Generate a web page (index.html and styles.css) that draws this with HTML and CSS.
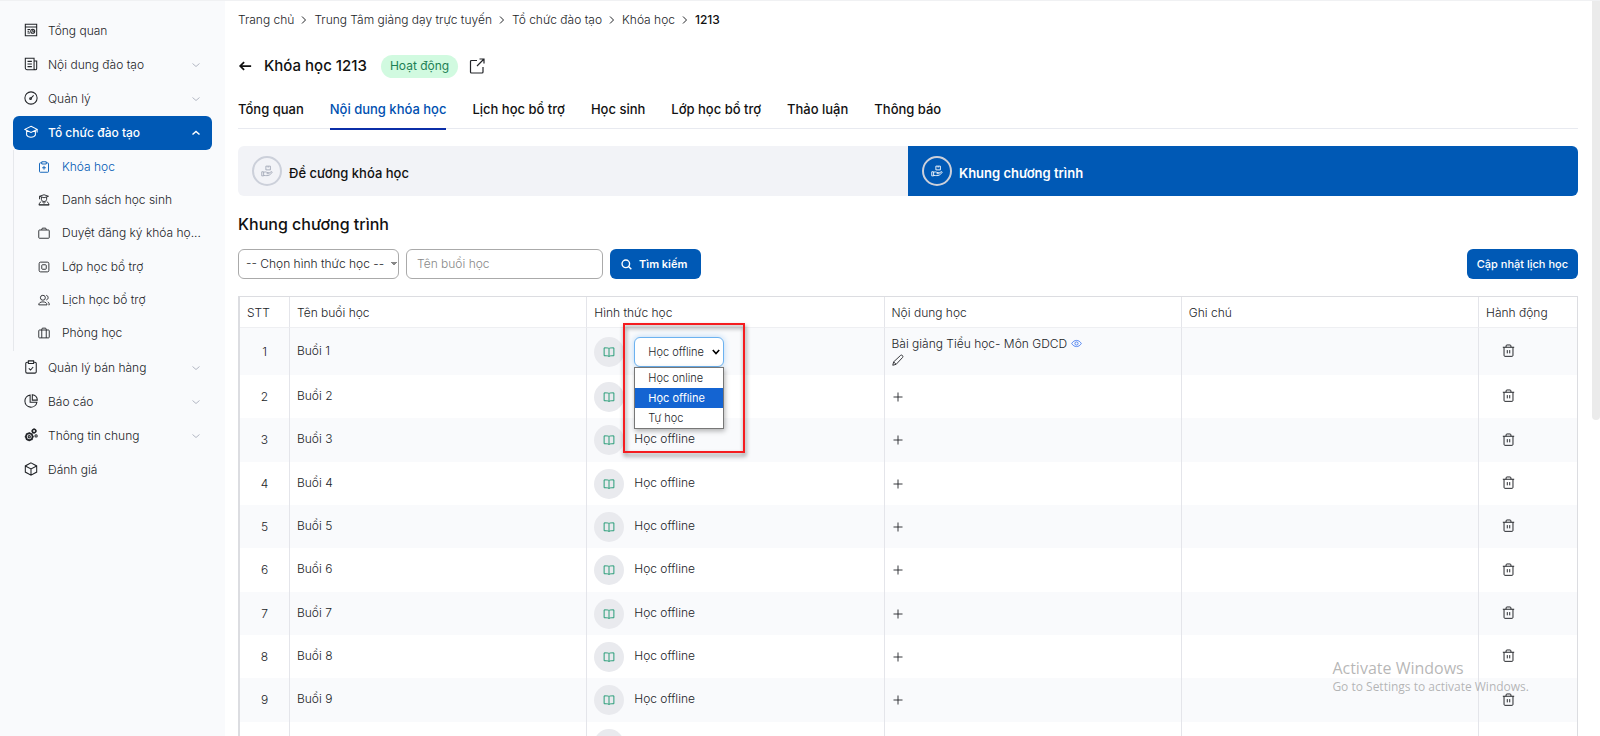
FILE: index.html
```html
<!DOCTYPE html>
<html lang="vi">
<head>
    <meta charset="UTF-8">
    <meta name="viewport" content="width=device-width, initial-scale=1.0">
    <title>Khóa học 1213</title>
    <link rel="stylesheet" href="styles.css">
</head>
<body>
    <!-- icon sprite -->
    <svg class="sprite" aria-hidden="true">
        <symbol id="i-dashboard" viewBox="0 0 16 16"><path d="M1.5 1.5h13v13h-13zM1.5 4.5h13M4 7.5h3M4 9.5h2M4 11.5h3"/><circle cx="10" cy="9.500" r="2.300"/><path d="M10 7.200v2.300h2.300"/></symbol>
        <symbol id="i-news" viewBox="0 0 16 16"><path d="M1.500 1.500h10v13h-8a2 2 0 0 1-2-2zM11.500 4.500h3v8.500a1.500 1.500 0 0 1-3 0M4 5h5M4 8h5M4 11h5"/></symbol>
        <symbol id="i-gauge" viewBox="0 0 16 16"><circle cx="8" cy="8" r="7"/><path d="M7.500 8.800 11 5"/><circle cx="7.500" cy="8.800" r="1"/></symbol>
        <symbol id="i-school" viewBox="0 0 16 16"><path d="M8 1.500 15 5 8 8.500 1 5zM3 6.200v5.300c1.500 3.300 8.500 3.300 10 0V6.200M15 5v3.500"/></symbol>
        <symbol id="i-clip-plus" viewBox="0 0 16 16"><path d="M5 2.500H3a1 1 0 0 0-1 1v10.500a1 1 0 0 0 1 1h10a1 1 0 0 0 1-1V3.500a1 1 0 0 0-1-1h-2M5 1h6v3H5zM8 6.500v5M5.500 9h5"/></symbol>
        <symbol id="i-student" viewBox="0 0 16 16"><path d="M8 1 14 3 8 5 2 3zM4.500 4v3c0 4 7 4 7 0V4M2 3v4M5.500 10 8 12.500 10.500 10M4 10.500c-1.500.5-2.500 2-2.500 4h13c0-2-1-3.500-2.500-4M1 14.500h14"/></symbol>
        <symbol id="i-bag" viewBox="0 0 16 16"><rect x="1" y="4" width="14" height="11" rx="1"/><path d="M5 4V3a1.500 1.500 0 0 1 1.500-1.500h3A1.500 1.500 0 0 1 11 3v1"/></symbol>
        <symbol id="i-square" viewBox="0 0 16 16"><rect x="1.500" y="1.500" width="13" height="13" rx="2"/><rect x="5" y="5" width="6" height="6" rx="1"/></symbol>
        <symbol id="i-users" viewBox="0 0 16 16"><circle cx="6.500" cy="5" r="3.300"/><path d="M1 14.500c0-2.500 2-4 5.500-4s5.500 1.500 5.500 4zM11 1.800c3.300.5 3.300 5.500 0 6.200M13 10.500c1.500.8 2 2 2 4h-1"/></symbol>
        <symbol id="i-case" viewBox="0 0 16 16"><rect x="1" y="4" width="14" height="10.500" rx="1"/><path d="M5 14.500V3a1.500 1.500 0 0 1 1.500-1.500h3A1.500 1.500 0 0 1 11 3v11.500"/></symbol>
        <symbol id="i-clip-check" viewBox="0 0 16 16"><path d="M5 2.500H3.500a1.500 1.500 0 0 0-1.500 1.500v9.500A1.500 1.500 0 0 0 3.500 15h9a1.500 1.500 0 0 0 1.500-1.500V4a1.500 1.500 0 0 0-1.500-1.500H11M5 1h6v3H5zM5.500 9.500 7.500 11.500 10.500 8"/></symbol>
        <symbol id="i-pie" viewBox="0 0 16 16"><path d="M7 1.300a6.900 6.900 0 1 0 7.700 8.200H7zM9.500 .8v6.200h5.700A6.300 6.300 0 0 0 9.500 .8z"/></symbol>
        <symbol id="i-gears" viewBox="0 0 16 16"><circle cx="6" cy="10" r="3.800" stroke-width="2"/><circle cx="6" cy="10" r="1.300"/><path d="M6 4.800v1.400M6 13.800v1.400M.8 10h1.400M9.800 10h1.400M2.300 6.300l1 1M8.700 12.700l1 1M2.300 13.700l1-1M8.700 7.300l1-1"/><circle cx="11.500" cy="3.500" r="2" stroke-width="1.800"/><circle cx="13.800" cy="9" r="1.300"/><path d="M11.500.6v.9M11.500 5.500v.9M8.600 3.500h.9M13.500 3.500h.9"/></symbol>
        <symbol id="i-box" viewBox="0 0 16 16"><path d="M8 1 14.500 4.500v7L8 15 1.500 11.500v-7zM1.500 4.500 8 8l6.500-3.500M8 8v7"/></symbol>
        <symbol id="i-down" viewBox="0 0 16 16"><path d="m1 5 7 6 7-6"/></symbol>
        <symbol id="i-up" viewBox="0 0 16 16"><path d="m1 11 7-6 7 6"/></symbol>
        <symbol id="i-right" viewBox="0 0 16 16"><path d="m4 1 7 7-7 7"/></symbol>
        <symbol id="i-back" viewBox="0 0 16 16"><path d="M15 8H2M7 3.500 2.500 8 7 12.500"/></symbol>
        <symbol id="i-export" viewBox="0 0 16 16"><path d="M8 2.500H2.500a1 1 0 0 0-1 1v10.500a1 1 0 0 0 1 1H13a1 1 0 0 0 1-1V9M10.500 1H15v4.500M15 1 8 8"/></symbol>
        <symbol id="i-hand" viewBox="0 0 16 16"><path d="M6.500 1.500h6v5h-6zM9.500 1.500V3.500M1 9h2.500v5.500H1zM3.500 10c2-1.500 3.500-.5 4.500 0h2c1 0 1 1.600 0 1.600H7.500M10.500 11l3-2c1-.5 2 .5 1 1.500l-3.500 3c-2 1-4 .5-7.500.5"/></symbol>
        <symbol id="i-search" viewBox="0 0 16 16"><circle cx="7" cy="7" r="5.500"/><path d="m11 11 4 4"/></symbol>
        <symbol id="i-book" viewBox="0 0 16 16"><path d="M8 3.500C7 2.500 6 2.500 1.500 2.500v10.500c4.500 0 5.500 0 6.500 1.200 1-1.200 2-1.200 6.500-1.200V2.500C10 2.500 9 2.500 8 3.500zM8 3.500v10.700"/></symbol>
        <symbol id="i-eye" viewBox="0 0 16 16"><path d="M1 8c3.500-6 10.500-6 14 0-3.500 6-10.500 6-14 0z"/><circle cx="8" cy="8" r="2.300"/></symbol>
        <symbol id="i-pencil" viewBox="0 0 16 16"><path d="m1 15 1.200-4.500L11.500 1.800c1.500-1.300 4 1 2.700 2.700L5.500 13.800zM2.200 10.500l3.300 3.300"/></symbol>
        <symbol id="i-plus" viewBox="0 0 16 16"><path d="M8 2v12M2 8h12"/></symbol>
        <symbol id="i-trash" viewBox="0 0 16 16"><path d="M1 4h14M2.500 4v10a1.200 1.200 0 0 0 1.200 1.200h8.600a1.200 1.200 0 0 0 1.200-1.200V4M5 4V2.500A1.200 1.200 0 0 1 6.200 1.200h3.600A1.200 1.200 0 0 1 11 2.500V4M6.500 7.500v4M9.500 7.500v4"/></symbol>
    </svg>

    <div class="app">
        <nav class="sidebar">
            <a href="#" class="nav-item"><svg class="icon"><use href="#i-dashboard"/></svg><span>Tổng quan</span></a>
            <a href="#" class="nav-item"><svg class="icon"><use href="#i-news"/></svg><span>Nội dung đào tạo</span><svg class="chevron"><use href="#i-down"/></svg></a>
            <a href="#" class="nav-item"><svg class="icon"><use href="#i-gauge"/></svg><span>Quản lý</span><svg class="chevron"><use href="#i-down"/></svg></a>
            <a href="#" class="nav-item active"><svg class="icon"><use href="#i-school"/></svg><span>Tổ chức đào tạo</span><svg class="chevron"><use href="#i-up"/></svg></a>
            <div class="subnav">
                <a href="#" class="sub-item current"><svg class="icon"><use href="#i-clip-plus"/></svg><span>Khóa học</span></a>
                <a href="#" class="sub-item"><svg class="icon"><use href="#i-student"/></svg><span>Danh sách học sinh</span></a>
                <a href="#" class="sub-item"><svg class="icon"><use href="#i-bag"/></svg><span>Duyệt đăng ký khóa họ...</span></a>
                <a href="#" class="sub-item"><svg class="icon"><use href="#i-square"/></svg><span>Lớp học bổ trợ</span></a>
                <a href="#" class="sub-item"><svg class="icon"><use href="#i-users"/></svg><span>Lịch học bổ trợ</span></a>
                <a href="#" class="sub-item"><svg class="icon"><use href="#i-case"/></svg><span>Phòng học</span></a>
            </div>
            <a href="#" class="nav-item"><svg class="icon"><use href="#i-clip-check"/></svg><span>Quản lý bán hàng</span><svg class="chevron"><use href="#i-down"/></svg></a>
            <a href="#" class="nav-item"><svg class="icon"><use href="#i-pie"/></svg><span>Báo cáo</span><svg class="chevron"><use href="#i-down"/></svg></a>
            <a href="#" class="nav-item"><svg class="icon"><use href="#i-gears"/></svg><span>Thông tin chung</span><svg class="chevron"><use href="#i-down"/></svg></a>
            <a href="#" class="nav-item"><svg class="icon"><use href="#i-box"/></svg><span>Đánh giá</span></a>
        </nav>

        <main class="content">
            <div class="breadcrumb">
                <a href="#">Trang chủ</a><svg><use href="#i-right"/></svg>
                <a href="#">Trung Tâm giảng dạy trực tuyến</a><svg><use href="#i-right"/></svg>
                <a href="#">Tổ chức đào tạo</a><svg><use href="#i-right"/></svg>
                <a href="#">Khóa học</a><svg><use href="#i-right"/></svg>
                <span class="here">1213</span>
            </div>

            <header class="page-title">
                <button class="icon-btn" aria-label="Quay lại"><svg class="back"><use href="#i-back"/></svg></button>
                <h1>Khóa học 1213</h1>
                <span class="badge">Hoạt động</span>
                <button class="icon-btn" aria-label="Mở liên kết"><svg class="export"><use href="#i-export"/></svg></button>
            </header>

            <div class="tabs">
                <a href="#">Tổng quan</a>
                <a href="#" class="active">Nội dung khóa học</a>
                <a href="#">Lịch học bổ trợ</a>
                <a href="#">Học sinh</a>
                <a href="#">Lớp học bổ trợ</a>
                <a href="#">Thảo luận</a>
                <a href="#">Thông báo</a>
            </div>

            <div class="switch">
                <button><span class="ring"><svg><use href="#i-hand"/></svg></span>Đề cương khóa học</button>
                <button class="active"><span class="ring"><svg><use href="#i-hand"/></svg></span>Khung chương trình</button>
            </div>

            <h2>Khung chương trình</h2>

            <form class="filters">
                <select class="type-filter" aria-label="Hình thức học">
                    <option>-- Chọn hình thức học --</option>
                </select>
                <input class="name-filter" type="text" placeholder="Tên buổi học" aria-label="Tên buổi học">
                <button type="button" class="btn"><svg><use href="#i-search"/></svg>Tìm kiếm</button>
                <button type="button" class="btn update">Cập nhật lịch học</button>
            </form>

            <table class="lessons">
                <colgroup>
                    <col class="col-no"><col><col><col><col><col class="col-action">
                </colgroup>
                <thead>
                    <tr><th>STT</th><th>Tên buổi học</th><th>Hình thức học</th><th>Nội dung học</th><th>Ghi chú</th><th>Hành động</th></tr>
                </thead>
                <tbody>
                    <tr class="editing">
                        <td class="no">1</td>
                        <td>Buổi 1</td>
                        <td>
                            <div class="type">
                                <span class="round"><svg><use href="#i-book"/></svg></span>
                                <div class="picker">
                                    <select class="type-select" aria-label="Hình thức học buổi 1">
                                        <option>Học online</option>
                                        <option selected>Học offline</option>
                                        <option>Tự học</option>
                                    </select>
                                    <ul class="options">
                                        <li>Học online</li>
                                        <li class="selected">Học offline</li>
                                        <li>Tự học</li>
                                    </ul>
                                    <div class="highlight"></div>
                                </div>
                            </div>
                        </td>
                        <td class="lesson">
                            <div>Bài giảng Tiểu học- Môn GDCD <button class="icon-btn eye" aria-label="Xem"><svg><use href="#i-eye"/></svg></button></div>
                            <button class="icon-btn" aria-label="Sửa"><svg><use href="#i-pencil"/></svg></button>
                        </td>
                        <td></td>
                        <td class="action"><button class="icon-btn" aria-label="Xóa"><svg><use href="#i-trash"/></svg></button></td>
                    </tr>
                    <tr>
                        <td class="no">2</td>
                        <td>Buổi 2</td>
                        <td><div class="type"><span class="round"><svg><use href="#i-book"/></svg></span></div></td>
                        <td class="add"><button class="icon-btn" aria-label="Thêm"><svg><use href="#i-plus"/></svg></button></td>
                        <td></td>
                        <td class="action"><button class="icon-btn" aria-label="Xóa"><svg><use href="#i-trash"/></svg></button></td>
                    </tr>
                    <tr>
                        <td class="no">3</td>
                        <td>Buổi 3</td>
                        <td><div class="type"><span class="round"><svg><use href="#i-book"/></svg></span><span>Học offline</span></div></td>
                        <td class="add"><button class="icon-btn" aria-label="Thêm"><svg><use href="#i-plus"/></svg></button></td>
                        <td></td>
                        <td class="action"><button class="icon-btn" aria-label="Xóa"><svg><use href="#i-trash"/></svg></button></td>
                    </tr>
                    <tr>
                        <td class="no">4</td>
                        <td>Buổi 4</td>
                        <td><div class="type"><span class="round"><svg><use href="#i-book"/></svg></span><span>Học offline</span></div></td>
                        <td class="add"><button class="icon-btn" aria-label="Thêm"><svg><use href="#i-plus"/></svg></button></td>
                        <td></td>
                        <td class="action"><button class="icon-btn" aria-label="Xóa"><svg><use href="#i-trash"/></svg></button></td>
                    </tr>
                    <tr>
                        <td class="no">5</td>
                        <td>Buổi 5</td>
                        <td><div class="type"><span class="round"><svg><use href="#i-book"/></svg></span><span>Học offline</span></div></td>
                        <td class="add"><button class="icon-btn" aria-label="Thêm"><svg><use href="#i-plus"/></svg></button></td>
                        <td></td>
                        <td class="action"><button class="icon-btn" aria-label="Xóa"><svg><use href="#i-trash"/></svg></button></td>
                    </tr>
                    <tr>
                        <td class="no">6</td>
                        <td>Buổi 6</td>
                        <td><div class="type"><span class="round"><svg><use href="#i-book"/></svg></span><span>Học offline</span></div></td>
                        <td class="add"><button class="icon-btn" aria-label="Thêm"><svg><use href="#i-plus"/></svg></button></td>
                        <td></td>
                        <td class="action"><button class="icon-btn" aria-label="Xóa"><svg><use href="#i-trash"/></svg></button></td>
                    </tr>
                    <tr>
                        <td class="no">7</td>
                        <td>Buổi 7</td>
                        <td><div class="type"><span class="round"><svg><use href="#i-book"/></svg></span><span>Học offline</span></div></td>
                        <td class="add"><button class="icon-btn" aria-label="Thêm"><svg><use href="#i-plus"/></svg></button></td>
                        <td></td>
                        <td class="action"><button class="icon-btn" aria-label="Xóa"><svg><use href="#i-trash"/></svg></button></td>
                    </tr>
                    <tr>
                        <td class="no">8</td>
                        <td>Buổi 8</td>
                        <td><div class="type"><span class="round"><svg><use href="#i-book"/></svg></span><span>Học offline</span></div></td>
                        <td class="add"><button class="icon-btn" aria-label="Thêm"><svg><use href="#i-plus"/></svg></button></td>
                        <td></td>
                        <td class="action"><button class="icon-btn" aria-label="Xóa"><svg><use href="#i-trash"/></svg></button></td>
                    </tr>
                    <tr>
                        <td class="no">9</td>
                        <td>Buổi 9</td>
                        <td><div class="type"><span class="round"><svg><use href="#i-book"/></svg></span><span>Học offline</span></div></td>
                        <td class="add"><button class="icon-btn" aria-label="Thêm"><svg><use href="#i-plus"/></svg></button></td>
                        <td></td>
                        <td class="action"><button class="icon-btn" aria-label="Xóa"><svg><use href="#i-trash"/></svg></button></td>
                    </tr>
                    <tr>
                        <td class="no"></td>
                        <td></td>
                        <td><div class="type"><span class="round"></span></div></td>
                        <td></td>
                        <td></td>
                        <td></td>
                    </tr>
                </tbody>
            </table>
        </main>
        <div class="scroll-thumb"></div>
        <div class="watermark">
            <p class="watermark-title">Activate Windows</p>
            <p>Go to Settings to activate Windows.</p>
        </div>
    </div>
</body>
</html>
```
FILE: styles.css
```css
* {
    box-sizing: border-box;
}

body {
    margin: 0;
    font-family: Inter, "Liberation Sans", sans-serif;
    font-size: 12px;
    font-weight: 300;
    line-height: 16px;
    color: #222428;
    background-color: #fff;
}

a {
    color: inherit;
    text-decoration: none;
}

button,
input,
select {
    font: inherit;
}

svg {
    display: block;
    flex: none;
    width: 12px;
    height: 12px;
    fill: none;
    stroke: currentColor;
    stroke-width: 1.2;
}

.sprite {
    display: none;
}

.app {
    position: relative;
    display: flex;
    height: 100vh;
    overflow: hidden;
    border-top: 1px solid #f0f1f3;
}

/* sidebar */
.sidebar {
    flex: none;
    width: 225px;
    padding: 13px 13px 0;
    background-color: #f9fafc;
}

.nav-item {
    display: flex;
    align-items: center;
    gap: 10px;
    height: 34px;
    padding: 0 12px 0 11px;
    border-radius: 6px;
}

.nav-item .icon {
    width: 14px;
    height: 14px;
    margin-bottom: 2px;
}

.chevron {
    width: 8px;
    height: 8px;
    margin-left: auto;
    color: #b4b8c4;
    stroke-width: 2;
}

.nav-item.active {
    background-color: #0059b5;
    color: #fff;
    font-weight: 500;
}

.nav-item.active .chevron {
    color: #fff;
    stroke-width: 3;
}

.subnav {
    padding-bottom: 1px;
    border-left: 1px solid #e6e8ec;
}

.sub-item {
    display: flex;
    align-items: center;
    gap: 12px;
    height: 33px;
    padding-left: 24px;
    white-space: nowrap;
}

.sub-item:nth-child(3n) {
    height: 34px;
}

.sub-item.current {
    color: #0059b5;
}

/* content */
.content {
    flex: 1;
    min-width: 0;
    padding: 11px 22px 0 13px;
}

.breadcrumb {
    display: flex;
    align-items: center;
    gap: 6px;
}

.breadcrumb svg {
    width: 8px;
    height: 8px;
    stroke-width: 2;
}

.breadcrumb .here {
    color: #111;
    font-weight: 500;
}

.page-title {
    display: flex;
    align-items: center;
    height: 24px;
    margin-top: 26px;
    color: #111;
}

.page-title h1 {
    margin: 0 14px 0 12px;
    font-size: 15px;
    font-weight: 500;
}

.icon-btn {
    padding: 0;
    border: 0;
    background: none;
    color: #222428;
    cursor: pointer;
}

.back {
    width: 14px;
    height: 14px;
    stroke: #111;
    stroke-width: 2;
}

.export {
    width: 16px;
    height: 16px;
}

.badge {
    margin-right: 11px;
    padding: 3px 9px 4px;
    border-radius: 12px;
    background-color: #d1fae0;
    color: #1e8055;
    font-weight: 400;
}

.tabs {
    display: flex;
    gap: 26px;
    margin-top: 21px;
    border-bottom: 1px solid #e8eaf0;
    color: #111;
    font-size: 13px;
    font-weight: 500;
}

.tabs a {
    padding: 2px 0 11px;
    margin-bottom: -2px;
    border-bottom: 2px solid transparent;
}

.tabs .active {
    border-color: #0b2ea8;
    color: #0050b0;
}

.switch {
    display: flex;
    margin-top: 17px;
    border-radius: 6px;
    overflow: hidden;
}

.switch button {
    flex: 1;
    display: flex;
    align-items: center;
    gap: 7px;
    height: 50px;
    padding: 3px 14px 0;
    border: 0;
    background-color: #f2f3f7;
    color: #111;
    font-size: 13px;
    font-weight: 500;
}

.switch .active {
    background-color: #0059b5;
    color: #fff;
    font-weight: 600;
}

.ring {
    display: flex;
    align-items: center;
    justify-content: center;
    width: 30px;
    height: 30px;
    margin-bottom: 3px;
    border: 2px solid #ccd0da;
    border-radius: 50%;
    color: #a4a9b8;
}

.active .ring {
    color: #fff;
}

h2 {
    margin: 16px 0 13px;
    color: #111;
    font-size: 16px;
    font-weight: 500;
    line-height: 24px;
}

.filters {
    display: flex;
    gap: 7px;
    height: 30px;
}

.type-filter,
.name-filter {
    border: 1px solid #aaa;
    border-radius: 6px;
    background-color: #fff;
    color: #222428;
}

.type-filter {
    width: 161px;
    padding: 0 7px;
    appearance: none;
    background-image: linear-gradient(to bottom left, #888 50%, transparent 50%), linear-gradient(to bottom right, #888 50%, transparent 50%);
    background-position: right 4px center, right 1px center;
    background-size: 3px 4px;
    background-repeat: no-repeat;
}

.name-filter {
    width: 197px;
    padding: 0 10px;
}

.name-filter::placeholder {
    color: #888;
}

.btn {
    display: flex;
    align-items: center;
    gap: 7px;
    padding: 0 14px 0 11px;
    border: 0;
    border-radius: 6px;
    background-color: #0059b5;
    color: #fff;
    font-size: 11px;
    font-weight: 600;
}

.btn svg {
    width: 11px;
    height: 11px;
    stroke-width: 2;
}

.btn.update {
    margin-left: auto;
    padding: 0 10px;
    font-weight: 500;
}

/* lessons table */
.lessons {
    width: 100%;
    margin-top: 17px;
    table-layout: fixed;
    border-spacing: 0;
    border: 1px solid #dcdde1;
    border-left-width: 2px;
}

.col-no {
    width: 50px;
}

.col-action {
    width: 98px;
}

th,
td {
    padding: 0 7px;
    border-right: 1px solid #e4e5ea;
    text-align: left;
}

th:last-child,
td:last-child {
    border-right: 0;
}

th {
    height: 31px;
    padding-top: 1px;
    border-bottom: 1px solid #eeeff2;
    font-weight: 300;
}

td {
    height: 43px;
    padding-bottom: 2px;
}

tr:nth-child(3n) td {
    height: 44px;
}

.editing td {
    height: 47px;
}

tbody tr:nth-child(odd) {
    background-color: #f9fafc;
}

td.no {
    padding: 0;
    text-align: center;
}

.type {
    display: flex;
    gap: 10px;
}

.type > span:last-child:not(.round) {
    padding-top: 6px;
}

.round {
    display: flex;
    align-items: center;
    justify-content: center;
    width: 30px;
    height: 30px;
    border-radius: 50%;
    background-color: #e9eaee;
    color: #14956b;
}

td:nth-child(3) {
    padding-bottom: 0;
}

td .icon-btn {
    display: block;
}

.lesson .eye {
    display: inline-block;
    color: #3b74f0;
    vertical-align: -1px;
}

.lesson .eye svg {
    width: 11px;
    height: 11px;
}

.lesson > div {
    margin-bottom: 2px;
}

.add {
    padding-bottom: 0;
}

.action .icon-btn {
    margin-left: 16px;
}

.action svg {
    width: 13px;
    height: 13px;
}

/* opened session type picker */
.picker {
    position: relative;
    width: 90px;
}

.type-select {
    display: block;
    width: 100%;
    height: 30px;
    padding: 0 13px;
    border: 1px solid #6cb2f0;
    border-radius: 6px;
    appearance: none;
    background: #fff url("data:image/svg+xml,%3Csvg xmlns='http://www.w3.org/2000/svg' viewBox='0 0 8 6' fill='none' stroke='%23000' stroke-width='1.6'%3E%3Cpath d='m.8 1 3.200 3.500L7.200 1'/%3E%3C/svg%3E") no-repeat right 3px center / 8px 6px;
    box-shadow: 0 0 6px #b5d6f5;
    color: #222428;
    font-size: 11px;
}

.options {
    position: absolute;
    z-index: 2;
    top: 30px;
    left: 0;
    width: 90px;
    margin: 0;
    padding: 0;
    border: 1px solid #777;
    background-color: #fff;
    box-shadow: 1px 2px 5px rgba(0, 0, 0, 0.3);
    font-size: 11px;
    line-height: 20px;
    list-style: none;
}

.options li {
    padding-left: 13px;
}

.options .selected {
    background-color: #1464d2;
    color: #fff;
    font-weight: 400;
}

.highlight {
    position: absolute;
    z-index: 1;
    top: -14px;
    left: -11px;
    width: 122px;
    height: 130px;
    border: 2px solid #f51d20;
    filter: drop-shadow(1px 3px 2px rgba(0, 0, 0, 0.5));
    pointer-events: none;
}

.scroll-thumb {
    position: absolute;
    top: 0;
    right: 0;
    width: 8px;
    height: 419px;
    border-radius: 0 0 4px 4px;
    background-color: #ebebeb;
}

.watermark {
    position: absolute;
    right: 71px;
    bottom: 41px;
    color: rgba(110, 110, 110, 0.5);
    font-family: "Open Sans", sans-serif;
    font-size: 12px;
    font-weight: 400;
}

.watermark p {
    margin: 0;
}

.watermark .watermark-title {
    margin-bottom: 3px;
    font-size: 16px;
}
```
